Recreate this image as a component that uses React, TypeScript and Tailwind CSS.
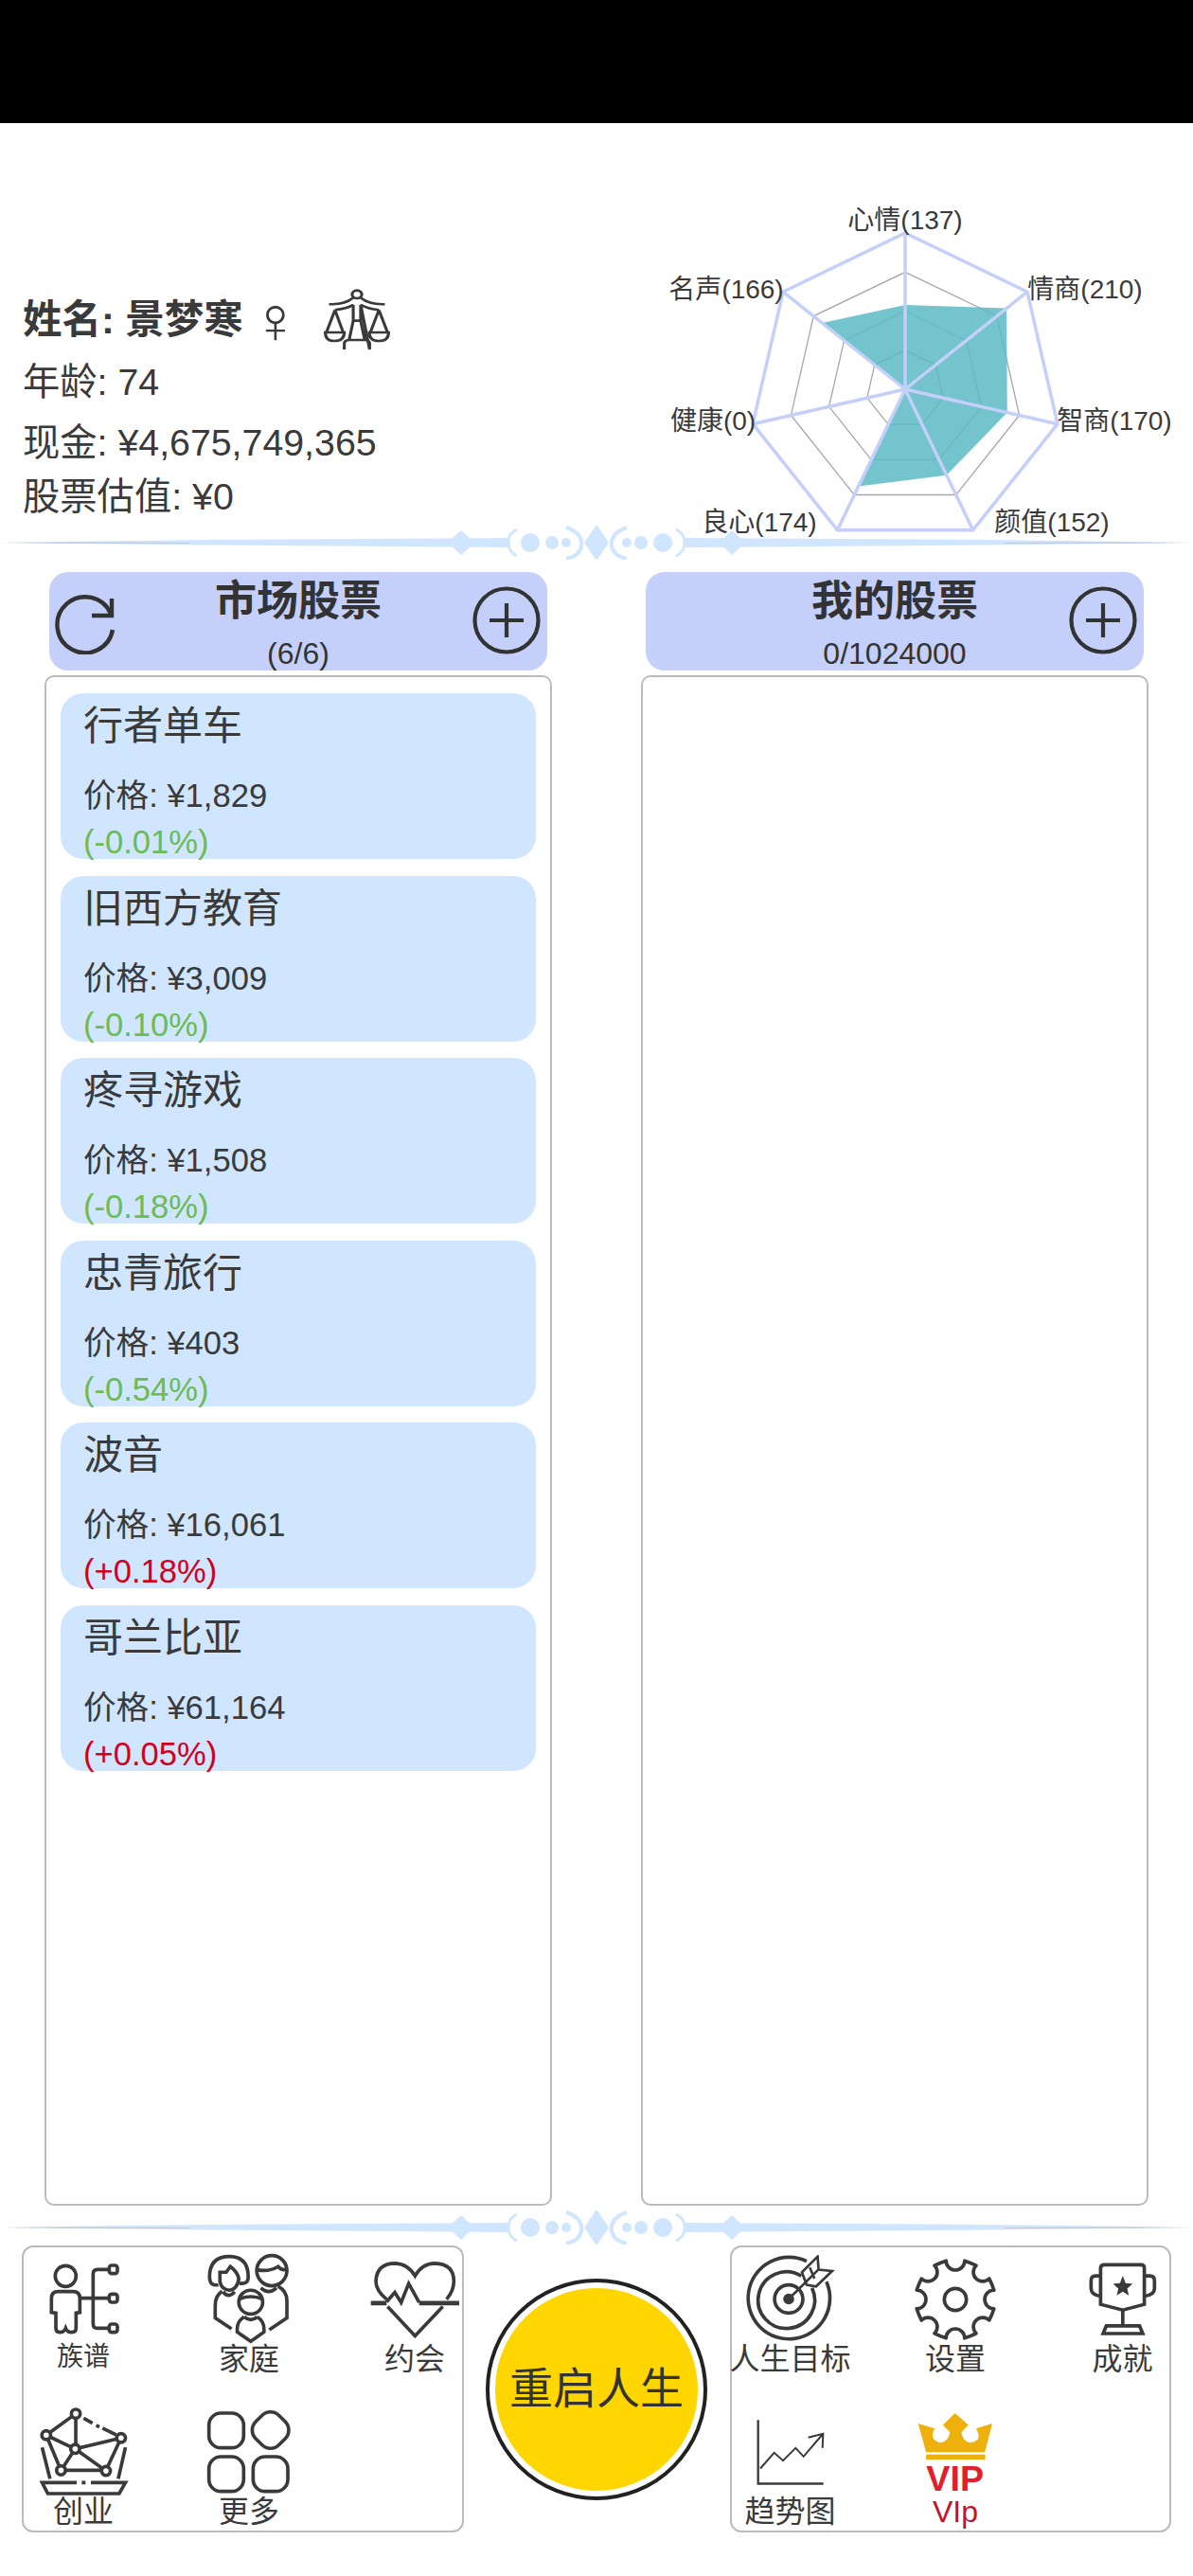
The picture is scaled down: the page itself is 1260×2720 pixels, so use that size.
const stocks = [
  { name: '行者单车', price: '¥1,829', change: '(-0.01%)', up: false },
  { name: '旧西方教育', price: '¥3,009', change: '(-0.10%)', up: false },
  { name: '疼寻游戏', price: '¥1,508', change: '(-0.18%)', up: false },
  { name: '忠青旅行', price: '¥403', change: '(-0.54%)', up: false },
  { name: '波音', price: '¥16,061', change: '(+0.18%)', up: true },
  { name: '哥兰比亚', price: '¥61,164', change: '(+0.05%)', up: true },
];

// Radar chart: centre and radius in the svg's own coordinates
const CX = 956;
const CY = 411;
const R = 165;
const point = (i: number, k: number) => {
  const a = (-90 + (360 / 7) * i) * (Math.PI / 180);
  return `${(CX + R * k * Math.cos(a)).toFixed(1)},${(CY + R * k * Math.sin(a)).toFixed(1)}`;
};
const ring = (k: number) => [0, 1, 2, 3, 4, 5, 6].map((i) => point(i, k)).join(' ');
const values = [0.54, 0.83, 0.67, 0.61, 0.69, 0, 0.68];
const labels = [
  { text: '心情(137)', x: 956, y: 232 },
  { text: '情商(210)', x: 1146, y: 305 },
  { text: '智商(170)', x: 1177, y: 444 },
  { text: '颜值(152)', x: 1111, y: 551 },
  { text: '良心(174)', x: 802, y: 551 },
  { text: '健康(0)', x: 753, y: 444 },
  { text: '名声(166)', x: 767, y: 305 },
];

function Radar() {
  return (
    <svg width="560" height="440" viewBox="700 130 560 440" className="overflow-visible shrink-0 relative z-10">
      {[0.25, 0.5, 0.75].map((k) => (
        <polygon key={k} points={ring(k)} fill="none" stroke="#a8a8a8" strokeWidth="1.3" />
      ))}
      <polygon points={values.map((v, i) => point(i, v)).join(' ')} fill="#5cbac4" fillOpacity="0.85" />
      {[0, 1, 2, 3, 4, 5, 6].map((i) => (
        <polyline key={i} points={`${CX},${CY} ${point(i, 1)}`} stroke="#c4cffa" strokeWidth="3.5" fill="none" />
      ))}
      <polygon points={ring(1)} fill="none" stroke="#c4cffa" strokeWidth="3.5" />
      {labels.map((l) => (
        <text key={l.text} x={l.x} y={l.y} textAnchor="middle" dominantBaseline="central" className="text-[28px] fill-[#3a3a3a]">
          {l.text}
        </text>
      ))}
    </svg>
  );
}

function Divider() {
  const side = (flip: boolean) => (
    <g transform={flip ? 'translate(1260 0) scale(-1 1)' : undefined}>
      <polygon points="0,18 80,16.8 220,15 537,13 537,23 220,20.5 80,19" fill="#d0e5fe" />
      <polygon points="0,18 80,17.5 200,18 200,19 80,19" fill="#c4ccd6" />
      <polygon points="473,18 487,5 501,18 487,31" fill="#d0e5fe" />
      <circle cx="560" cy="18" r="10" fill="#d0e5fe" />
      <circle cx="583" cy="18" r="7" fill="#d0e5fe" />
      <circle cx="598" cy="18" r="5" fill="#d0e5fe" />
      <path d="M546 4 Q534 10 538 24 Q540 29 546 32" fill="none" stroke="#d0e5fe" strokeWidth="3" />
      <path d="M598 2 Q616 8 614 22 Q612 32 598 35" fill="none" stroke="#d0e5fe" strokeWidth="4" />
    </g>
  );
  return (
    <svg width="1260" height="36" viewBox="0 0 1260 36" className="block shrink-0">
      {side(false)}
      {side(true)}
      <polygon points="630,-1 643,18 630,37 617,18" fill="#d0e5fe" />
    </svg>
  );
}

function RefreshIcon() {
  return (
    <svg width="64" height="64" viewBox="0 0 64 64" fill="none" stroke="#333" strokeWidth="4.4" className="justify-self-start ml-[6px] mt-[6px]">
      <path d="M61 38 A29.5 29.5 0 1 1 59 21" />
      <path d="M60 5 V23 H39" />
    </svg>
  );
}

function PlusIcon() {
  return (
    <svg width="72" height="72" viewBox="0 0 72 72" fill="none" stroke="#333" strokeWidth="4.2" className="justify-self-end mr-[7px] -mt-[3px]">
      <circle cx="36" cy="36" r="33.5" />
      <path d="M18 36 H54 M36 18 V54" />
    </svg>
  );
}

function ScaleIcon() {
  return (
    <svg width="70" height="66" viewBox="838 378 178 204" preserveAspectRatio="none" fill="none" stroke="#3a3a3a" strokeWidth="8" className="ml-[25px]">
      <circle cx="927" cy="396" r="13" />
      <path d="M893 576 V556 Q893 547 906 545 L917 482 V430 M937 430 V482 L948 545 Q961 547 961 556 V576 Z M905 545 H948 M917 482 H937" />
      <path d="M852 428 Q895 430 916 408 M938 408 Q960 430 1002 428 M868 447 Q900 442 917 430 M986 447 Q955 442 937 430" />
      <path d="M842 520 Q842 548 866 548 Q893 548 893 520 Z M868 447 L845 520 M868 447 L890 520" />
      <path d="M960 520 Q960 548 986 548 Q1012 548 1012 520 Z M986 447 L963 520 M986 447 L1009 520" />
    </svg>
  );
}

const ink = { fill: 'none', stroke: '#3a3a3a', strokeWidth: 11 };

function TreeIcon() {
  return (
    <svg width="75" height="75" viewBox="150 215 225 225" {...ink}>
      <circle cx="205" cy="255" r="33" />
      <path d="M160 370 V325 Q160 304 182 304 H228 Q250 304 250 325 V370 L238 372 V420 Q238 433 224 433 Q210 433 205 420 Q200 433 186 433 Q174 433 174 420 V372 Z" />
      <path d="M250 325 H344 M344 234 H306 Q292 234 292 248 V406 Q292 420 306 420 H344" />
      <rect x="343" y="221" width="26" height="26" rx="8" />
      <rect x="343" y="312" width="26" height="26" rx="8" />
      <rect x="343" y="407" width="26" height="26" rx="8" />
    </svg>
  );
}

function FamilyIcon() {
  return (
    <svg width="88" height="97" viewBox="655 180 265 290" {...ink}>
      <path d="M690 280 Q662 285 662 255 Q662 190 725 190 Q785 190 785 255 Q785 280 757 275" />
      <path d="M695 240 H715 L728 222 Q750 238 755 260 Q750 295 724 297 Q700 295 695 270 Z" />
      <circle cx="860" cy="235" r="48" />
      <path d="M812 232 Q850 240 880 222 Q892 236 908 230" />
      <path d="M702 300 Q680 315 680 345 V385 L732 420 M705 302 Q722 325 742 302" />
      <path d="M880 285 Q908 300 908 330 V385 L852 423 M825 290 Q850 312 875 290" />
      <circle cx="793" cy="335" r="38" />
      <path d="M757 325 Q793 310 830 325" />
      <path d="M772 382 Q750 395 750 420 V430 L793 460 L835 430 V420 Q835 395 814 382 M772 382 Q793 400 814 382" />
    </svg>
  );
}

function HeartIcon() {
  return (
    <svg width="95" height="82" viewBox="1170 200 285 245" {...ink}>
      <path d="M1222 322 Q1188 295 1188 265 Q1190 208 1250 208 Q1290 210 1312 248 Q1335 208 1375 208 Q1435 210 1435 265 Q1435 295 1412 322" />
      <path d="M1225 345 L1312 438 L1400 345" />
      <path d="M1222 330 L1248 300 L1268 332 L1292 272 L1325 332" />
      <path d="M1172 334 H1222 M1325 334 H1452" strokeWidth="14" />
    </svg>
  );
}

function NetworkIcon() {
  return (
    <svg width="95" height="93" viewBox="120 668 285 280" {...ink}>
      <path d="M237 688 L143 756 M237 688 V800 M143 756 L235 800 L381 765 M235 800 L190 868 M235 800 L333 870 M143 756 L190 868 H333 L381 765" />
      <path d="M262 702 L290 718 M302 725 L312 730 M322 734 L365 755" />
      {[[237, 688], [143, 756], [381, 765], [235, 800], [190, 868], [333, 870]].map(([x, y]) => (
        <circle key={x} cx={x} cy={y} r="14" fill="#fff" />
      ))}
      <path d="M130 795 L155 895 M395 795 L372 895" />
      <path d="M240 907 H130 L148 942 H375 L395 907 H285 M256 907 H268" />
    </svg>
  );
}

function MoreIcon() {
  return (
    <svg width="90" height="90" viewBox="652 676 270 270" {...ink}>
      <rect x="660" y="688" width="110" height="110" rx="38" />
      <rect x="803" y="690" width="104" height="104" rx="38" transform="rotate(45 855 742)" />
      <rect x="660" y="826" width="110" height="110" rx="38" />
      <rect x="800" y="826" width="110" height="110" rx="38" />
    </svg>
  );
}

function TargetIcon() {
  return (
    <svg width="95" height="93" viewBox="140 185 285 280" {...ink}>
      <path d="M335 205 A130 130 0 1 0 398 270" />
      <path d="M318 252 A90 90 0 1 0 352 290" />
      <circle cx="278" cy="325" r="45" />
      <circle cx="278" cy="325" r="12" fill="#3a3a3a" />
      <path d="M278 325 L372 232" strokeWidth="8" />
      <path d="M320 240 L370 190 L373 232 L416 236 L365 285 L335 280 Z M345 225 L360 260" strokeWidth="8" />
    </svg>
  );
}

// Gear outline: eight flat teeth with scooped valleys between them
const gearPath = (() => {
  const cx = 808;
  const cy = 325;
  const r = 126;
  const pt = (deg: number) => {
    const a = (deg * Math.PI) / 180;
    return `${(cx + r * Math.cos(a)).toFixed(1)} ${(cy + r * Math.sin(a)).toFixed(1)}`;
  };
  let d = '';
  for (let i = 0; i < 8; i++) {
    const a = -67.5 + i * 45;
    d += `${i === 0 ? 'M' : 'L'}${pt(a - 9)} Q${pt(a)} ${pt(a + 9)} A28 28 0 0 0 ${pt(a + 36)} `;
  }
  return d + 'Z';
})();

function GearIcon() {
  return (
    <svg width="88" height="88" viewBox="676 193 264 264" {...ink}>
      <path d={gearPath} strokeLinejoin="round" />
      <circle cx="808" cy="325" r="35" />
    </svg>
  );
}

function TrophyIcon() {
  return (
    <svg width="72" height="77" viewBox="1225 208 215 230" {...ink}>
      <path d="M1262 226 Q1262 215 1274 215 H1390 Q1400 215 1400 226 V340 L1332 358 L1262 340 Z" />
      <path d="M1262 250 H1246 Q1232 250 1232 265 V290 Q1232 310 1262 314 M1400 250 H1418 Q1432 250 1432 265 V290 Q1432 310 1400 314" />
      <polygon points="1332,250 1341,273 1363,275 1346,290 1351,312 1332,300 1313,312 1318,290 1301,275 1323,273" fill="#3a3a3a" stroke="none" />
      <path d="M1332 358 V408 M1270 432 L1280 408 H1385 L1395 432 Z" />
    </svg>
  );
}

function ChartIcon() {
  return (
    <svg width="75" height="72" viewBox="170 700 225 215" fill="none" stroke="#3a3a3a" strokeWidth="6">
      <path d="M181 706 V908 H388" strokeWidth="7" />
      <path d="M188 860 L232 810 L260 835 L300 795 L325 822 L385 752 M340 762 L387 750 L385 795" />
    </svg>
  );
}

function VipIcon() {
  return (
    <svg width="80" height="84" viewBox="688 682 238 250" className="overflow-visible">
      <path d="M690 718 L742 733 Q722 770 760 778 Q785 775 790 745 L768 722 L806 685 L848 722 L826 745 Q830 775 855 778 Q895 770 872 733 L923 718 L900 808 H715 Z" fill="#eeb00c" />
      <rect x="715" y="815" width="186" height="16" fill="#eeb00c" />
      <text x="806" y="929" textAnchor="middle" fill="#e0202c" fontWeight="700" className="text-[112px]">
        VIP
      </text>
    </svg>
  );
}

function MenuItem({ icon, label, small, red }: { icon: React.ReactNode; label: string; small?: boolean; red?: boolean }) {
  return (
    <div className="flex flex-col items-center">
      <div className="h-[95px] flex items-center justify-center">{icon}</div>
      <span
        className={`whitespace-nowrap ${small ? 'text-[28px] leading-[32px] -mt-[2px]' : 'text-[32px] leading-[32px]'} ${
          red ? 'text-[#c8102e]' : 'text-[#3a3a3a]'
        }`}
      >
        {label}
      </span>
    </div>
  );
}

function StockHeader({ title, sub, refresh }: { title: string; sub: string; refresh?: boolean }) {
  return (
    <div className="mx-[5px] h-[104px] rounded-[20px] bg-[#c4cffa] grid grid-cols-[1fr_auto_1fr] items-center text-[#333]">
      {refresh ? <RefreshIcon /> : <span />}
      <div className="flex flex-col items-center">
        <span className="text-[44px] leading-[56px] font-bold mt-[2px]">{title}</span>
        <span className="text-[32px] leading-[34px] mt-[10px]">{sub}</span>
      </div>
      <PlusIcon />
    </div>
  );
}

export default function App() {
  return (
    <div className="h-[2720px] w-[1260px] flex flex-col bg-white text-[#3a3a3a] font-['Liberation_Sans','Noto_Sans_CJK_SC',sans-serif]">
      <div className="h-[130px] bg-black shrink-0" />

      {/* Player info and radar */}
      <div className="h-[425px] shrink-0 flex justify-between items-start">
        <div className="pl-[24px] pt-[167px] text-[39.3px] leading-[48px]">
          <div className="flex items-center font-bold h-[82px]">
            <span className="text-[41.5px]">姓名: 景梦寒</span>
            <span className="text-[70px] leading-none font-normal ml-[8px]">♀</span>
            <ScaleIcon />
          </div>
          <div>年龄: 74</div>
          <div className="mt-[16px]">现金: ¥4,675,749,365</div>
          <div className="mt-[9px]">股票估值: ¥0</div>
        </div>
        <Radar />
      </div>

      <Divider />

      {/* Stock columns */}
      <div className="flex-1 min-h-0 pt-[13px] px-[47px] flex gap-[94px]">
        <div className="w-[536px] flex flex-col">
          <StockHeader title="市场股票" sub="(6/6)" refresh />
          <div className="flex-1 mt-[5px] border-2 border-[#bbb] rounded-[10px] pt-[17px] px-[15px] flex flex-col gap-[17.6px]">
            {stocks.map((s) => (
              <div key={s.name} className="h-[175px] shrink-0 rounded-[24px] bg-[#d0e5fe] px-[24px] pt-[7px]">
                <div className="text-[42px] leading-[56px]">{s.name}</div>
                <div className="text-[34.6px] leading-[40px] mt-[25px]">价格: {s.price}</div>
                <div className={`text-[34.6px] leading-[40px] mt-[9px] ${s.up ? 'text-[#d0021b]' : 'text-[#6cbb54]'}`}>{s.change}</div>
              </div>
            ))}
          </div>
        </div>
        <div className="w-[536px] flex flex-col">
          <StockHeader title="我的股票" sub="0/1024000" />
          <div className="flex-1 mt-[5px] border-2 border-[#bbb] rounded-[10px]" />
        </div>
      </div>

      <div className="mt-[5px]">
        <Divider />
      </div>

      {/* Bottom menus */}
      <div className="mt-[1px] mb-[46px] px-[23px] flex justify-between items-center">
        <div className="w-[467px] h-[303px] border-2 border-[#bbb] rounded-[12px] pt-[7px] grid grid-cols-[126px_224px_126px] auto-rows-[127px] gap-y-[34px]">
          <MenuItem icon={<TreeIcon />} label="族谱" small />
          <MenuItem icon={<FamilyIcon />} label="家庭" />
          <MenuItem icon={<HeartIcon />} label="约会" />
          <MenuItem icon={<NetworkIcon />} label="创业" />
          <MenuItem icon={<MoreIcon />} label="更多" />
        </div>

        <button className="w-[234px] h-[234px] rounded-full border-[4px] border-[#222] bg-white p-[6px] mr-[1px]">
          <span className="w-full h-full rounded-full bg-[#ffd600] flex items-center justify-center text-[46px] text-[#333]">重启人生</span>
        </button>

        <div className="w-[466px] h-[303px] border-2 border-[#bbb] rounded-[12px] pt-[7px] grid grid-cols-[123px_226px_127px] auto-rows-[127px] gap-y-[34px]">
          <MenuItem icon={<TargetIcon />} label="人生目标" />
          <MenuItem icon={<GearIcon />} label="设置" />
          <MenuItem icon={<TrophyIcon />} label="成就" />
          <MenuItem icon={<ChartIcon />} label="趋势图" />
          <MenuItem icon={<VipIcon />} label="VIp" red />
        </div>
      </div>
    </div>
  );
}
